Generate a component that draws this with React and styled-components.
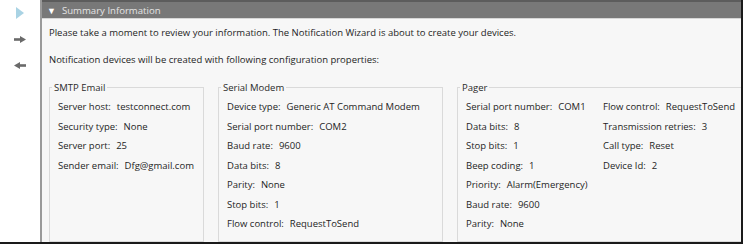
import styled, { createGlobalStyle } from "styled-components";

const Global = createGlobalStyle`
  html, body {
    margin: 0;
    background: #ffffff;
  }
  body {
    font-family: "Open Sans", "Noto Sans", sans-serif;
    color: #1e1e1e;
  }
`;

const Frame = styled.div`
  width: 743px;
  height: 244px;
  box-sizing: border-box;
  border-right: 2px solid #1a1a1a;
  border-bottom: 2px solid #1a1a1a;
  display: flex;
  overflow: hidden;
  background: #ffffff;
`;

const Sidebar = styled.div`
  width: 40px;
  flex: none;
  border-right: 2px solid #9a9a9a;
  display: flex;
  flex-direction: column;
  align-items: center;
  padding-top: 7px;
  gap: 14px;
`;

const NavIcon = styled.div`
  width: 14px;
  height: 12px;
  display: flex;
  align-items: center;
  justify-content: center;
`;

const Panel = styled.div`
  flex: 1;
  min-width: 0;
  background: #f7f7f7;
  display: flex;
  flex-direction: column;
`;

const Header = styled.div`
  height: 17px;
  background: #787878;
  border-top: 2px solid #5c5c5c;
  border-bottom: 1px solid #d6d6d6;
  display: flex;
  align-items: center;
  gap: 6px;
  padding-left: 5px;
  font-size: 9.6px;
  color: #e4e4e4;
`;

const Caret = styled.span`
  font-size: 9px;
  color: #ffffff;
`;

const Body = styled.div`
  padding: 4px 0 0 7px;
  font-size: 9.5px;
`;

const Para = styled.p`
  margin: 0 0 8px;
  line-height: 19px;
`;

const Groups = styled.div`
  display: flex;
  gap: 14px;
  margin-top: 12px;
`;

const Group = styled.fieldset`
  margin: 0;
  padding: 3px 0 0 8px;
  border: 1px solid #dadada;
  width: ${(p) => p.$w}px;
  flex: none;
  box-sizing: border-box;
  height: 161px;
`;

const Legend = styled.legend`
  padding: 0 2px;
  margin-left: -6px;
  font-size: 9.5px;
  color: #2a2a2a;
`;

const Cols = styled.div`
  display: grid;
  grid-template-columns: ${(p) => p.$cols || "1fr"};
  grid-auto-flow: column;
  grid-template-rows: repeat(${(p) => p.$rows}, 19.5px);
`;

const Row = styled.div`
  display: flex;
  align-items: center;
  gap: 6px;
  white-space: nowrap;
`;

const Arrow = ({ dir }) => (
  <svg width="12" height="7" viewBox="0 0 12 7">
    <g transform={dir === "left" ? "translate(12,0) scale(-1,1)" : undefined}>
      <rect x="0" y="2.2" width="7" height="2.6" fill="#6a6a6a" />
      <polygon points="6,0 12,3.5 6,7" fill="#6a6a6a" />
    </g>
  </svg>
);

const smtp = [
  ["Server host:", "testconnect.com"],
  ["Security type:", "None"],
  ["Server port:", "25"],
  ["Sender email:", "Dfg@gmail.com"],
];

const modem = [
  ["Device type:", "Generic AT Command Modem"],
  ["Serial port number:", "COM2"],
  ["Baud rate:", "9600"],
  ["Data bits:", "8"],
  ["Parity:", "None"],
  ["Stop bits:", "1"],
  ["Flow control:", "RequestToSend"],
];

const pager = [
  ["Serial port number:", "COM1"],
  ["Data bits:", "8"],
  ["Stop bits:", "1"],
  ["Beep coding:", "1"],
  ["Priority:", "Alarm(Emergency)"],
  ["Baud rate:", "9600"],
  ["Parity:", "None"],
  ["Flow control:", "RequestToSend"],
  ["Transmission retries:", "3"],
  ["Call type:", "Reset"],
  ["Device Id:", "2"],
];

const rows = (items) =>
  items.map(([k, v]) => (
    <Row key={k + v}>
      <span>{k}</span>
      <span>{v}</span>
    </Row>
  ));

export default function App() {
  return (
    <>
      <Global />
      <Frame>
        <Sidebar>
          <NavIcon>
            <svg width="8" height="12" viewBox="0 0 8 12">
              <polygon points="0,0 8,6 0,12" fill="#a9d3e4" />
            </svg>
          </NavIcon>
          <NavIcon>
            <Arrow dir="right" />
          </NavIcon>
          <NavIcon>
            <Arrow dir="left" />
          </NavIcon>
        </Sidebar>
        <Panel>
          <Header>
            <Caret>▼</Caret>
            Summary Information
          </Header>
          <Body>
            <Para>
              Please take a moment to review your information. The Notification
              Wizard is about to create your devices.
            </Para>
            <Para>
              Notification devices will be created with following configuration
              properties:
            </Para>
            <Groups>
              <Group $w={155}>
                <Legend>SMTP Email</Legend>
                <Cols $rows={7}>{rows(smtp)}</Cols>
              </Group>
              <Group $w={225}>
                <Legend>Serial Modem</Legend>
                <Cols $rows={7}>{rows(modem)}</Cols>
              </Group>
              <Group $w={300}>
                <Legend>Pager</Legend>
                <Cols $rows={7} $cols="137px 1fr">
                  {rows(pager)}
                </Cols>
              </Group>
            </Groups>
          </Body>
        </Panel>
      </Frame>
    </>
  );
}
